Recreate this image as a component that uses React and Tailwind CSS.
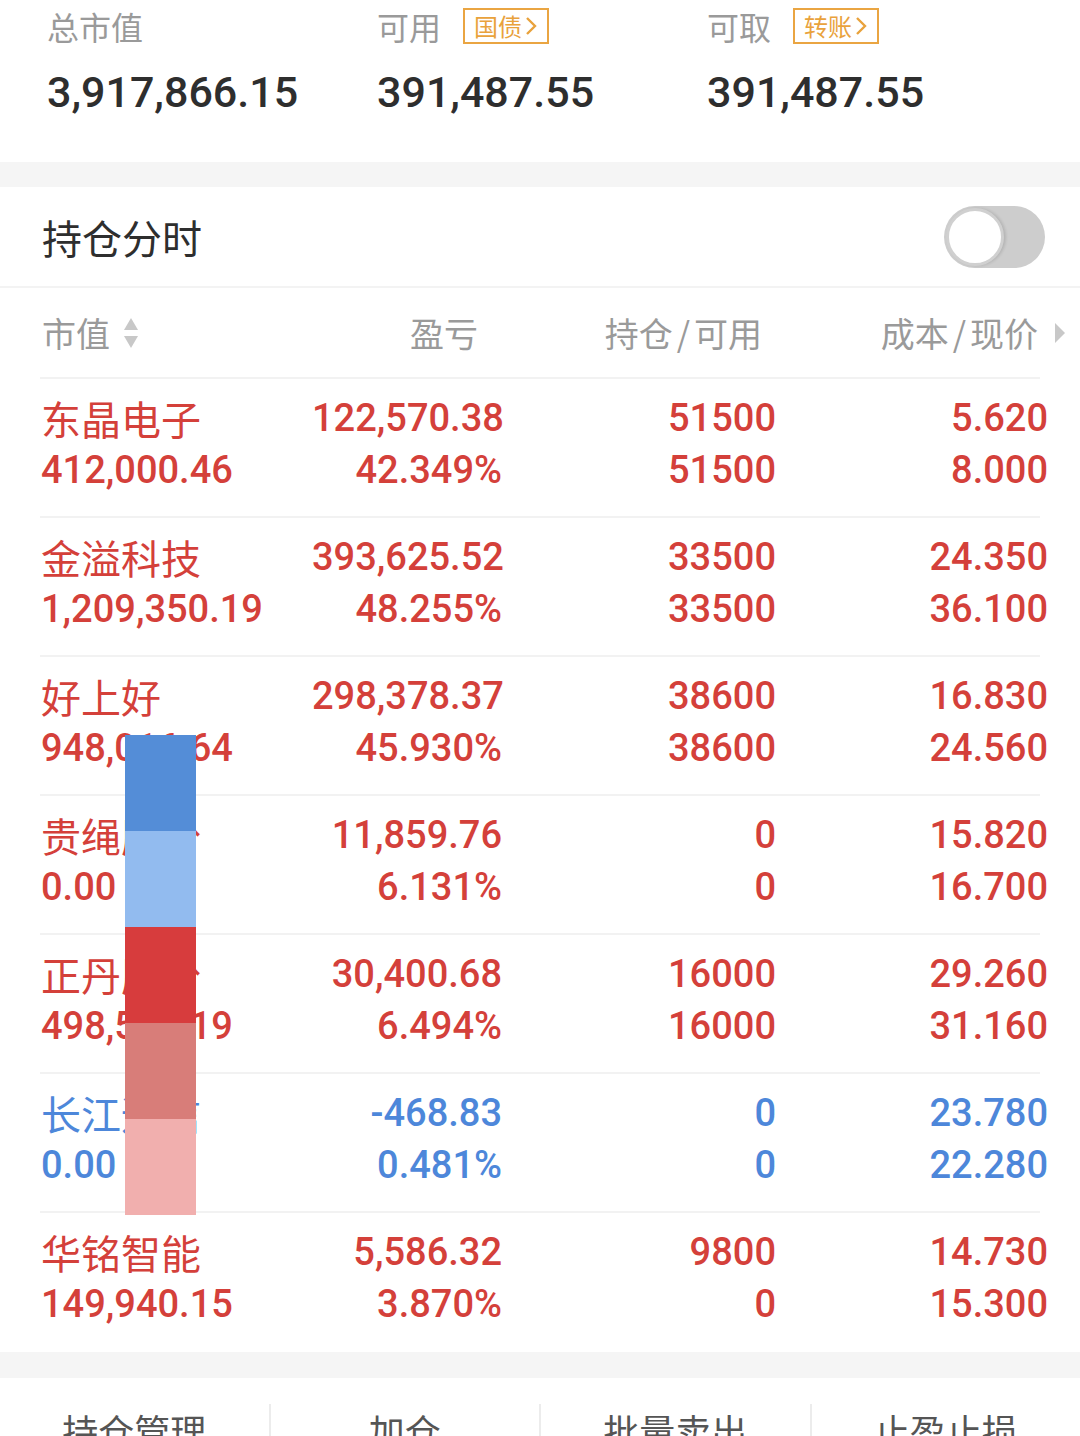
const RED = 'text-[#d4403a]';
const BLUE = 'text-[#4d87da]';

const rows = [
  { name: '东晶电子', value: '412,000.46', pnl: '122,570.38', pct: '42.349%', hold: '51500', avail: '51500', cost: '5.620', price: '8.000', up: true },
  { name: '金溢科技', value: '1,209,350.19', pnl: '393,625.52', pct: '48.255%', hold: '33500', avail: '33500', cost: '24.350', price: '36.100', up: true },
  { name: '好上好', value: '948,016.64', pnl: '298,378.37', pct: '45.930%', hold: '38600', avail: '38600', cost: '16.830', price: '24.560', up: true },
  { name: '贵绳股份', value: '0.00', pnl: '11,859.76', pct: '6.131%', hold: '0', avail: '0', cost: '15.820', price: '16.700', up: true },
  { name: '正丹股份', value: '498,560.19', pnl: '30,400.68', pct: '6.494%', hold: '16000', avail: '16000', cost: '29.260', price: '31.160', up: true },
  { name: '长江通信', value: '0.00', pnl: '-468.83', pct: '0.481%', hold: '0', avail: '0', cost: '23.780', price: '22.280', up: false },
  { name: '华铭智能', value: '149,940.15', pnl: '5,586.32', pct: '3.870%', hold: '9800', avail: '0', cost: '14.730', price: '15.300', up: true },
];

const cjk = "font-['Noto_Sans_CJK_SC',sans-serif]";
const num = "font-['Roboto','Noto_Sans_CJK_SC',sans-serif] font-medium";

function Badge({ children }) {
  return (
    <span className={`ml-[22px] inline-flex h-[36px] items-center border-2 border-[#eaa542] px-[9px] text-[24px] text-[#e9a23c] ${cjk}`}>
      {children}
      <svg width="14" height="22" viewBox="0 0 14 22" className="ml-[2px]">
        <path d="M3 3 L11 11 L3 19" fill="none" stroke="#e9a23c" strokeWidth="2.4" />
      </svg>
    </span>
  );
}

function Summary() {
  const cols = [
    { label: '总市值', value: '3,917,866.15' },
    { label: '可用', value: '391,487.55', badge: '国债' },
    { label: '可取', value: '391,487.55', badge: '转账' },
  ];
  return (
    <div className="flex h-[162px] bg-white pl-[47px]">
      {cols.map((c) => (
        <div key={c.label} className="w-[330px]">
          <div className="flex h-[54px] items-center pb-[2px]">
            <span className={`text-[32px] leading-none text-[#9a9a9a] ${cjk}`}>{c.label}</span>
            {c.badge && <Badge>{c.badge}</Badge>}
          </div>
          <div className={`mt-[8px] text-[43px] leading-[60px] text-[#2e2e2e] ${num}`}>{c.value}</div>
        </div>
      ))}
    </div>
  );
}

function Toggle() {
  return (
    <div className="relative h-[62px] w-[101px] rounded-full bg-[#cdcdcd]">
      <div className="absolute left-[2px] top-[2px] h-[58px] w-[58px] rounded-full border-[3px] border-[#d0d0d0] bg-white shadow-[2px_0_3px_rgba(0,0,0,0.12)]" />
    </div>
  );
}

function SortArrows() {
  return (
    <svg width="18" height="34" viewBox="0 0 18 34" className="ml-[12px]">
      <path d="M9 2 L16 14 L2 14 Z" fill="#c8c8c8" />
      <path d="M2 20 L16 20 L9 32 Z" fill="#c8c8c8" />
    </svg>
  );
}

function HeaderRow() {
  return (
    <div className={`mx-[40px] flex h-[91px] items-center border-b-2 border-[#f2f2f2] text-[34px] text-[#9a9a9a] ${cjk}`}>
      <div className="flex w-[330px] items-center pl-[2px]">
        市值
        <SortArrows />
      </div>
      <div className="w-[108px] text-right">盈亏</div>
      <div className="w-[284px] text-right">
        持仓<span className="mx-[4px]">/</span>可用
      </div>
      <div className="flex flex-1 items-center justify-end">
        成本<span className="mx-[4px]">/</span>现价
        <svg width="12" height="22" viewBox="0 0 12 22" className="ml-[16px] mr-[-26px]">
          <path d="M1 1 L11 11 L1 21 Z" fill="#c8c8c8" />
        </svg>
      </div>
    </div>
  );
}

function Row({ r, last }) {
  const color = r.up ? RED : BLUE;
  return (
    <div className={`ml-[40px] mr-[40px] h-[139px] pt-[13px] ${last ? '' : 'border-b-2 border-[#f2f2f2]'}`}>
      <div className={`mr-[-8px] flex ${color}`}>
        <div className="w-[272px] pl-[1px]">
          <div className={`h-[52px] text-[40px] leading-[52px] ${cjk}`}>{r.name}</div>
          <div className={`h-[52px] text-[38px] leading-[52px] ${num}`}>{r.value}</div>
        </div>
        <div className={`w-[190px] text-right text-[38px] leading-[52px] ${num}`}>
          <div>{r.pnl}</div>
          <div>{r.pct}</div>
        </div>
        <div className={`w-[274px] text-right text-[38px] leading-[52px] ${num}`}>
          <div>{r.hold}</div>
          <div>{r.avail}</div>
        </div>
        <div className={`flex-1 text-right text-[38px] leading-[52px] ${num}`}>
          <div>{r.cost}</div>
          <div>{r.price}</div>
        </div>
      </div>
    </div>
  );
}

function ColorBar() {
  const segs = ['bg-[#548dd7]', 'bg-[#92bbef]', 'bg-[#d73c3d]', 'bg-[#d87d79]', 'bg-[#f1afae]'];
  return (
    <div className="absolute left-[125px] top-[735px] flex w-[71px] flex-col">
      {segs.map((s) => (
        <div key={s} className={`h-[96px] ${s}`} />
      ))}
    </div>
  );
}

export default function App() {
  const tabs = ['持仓管理', '加仓', '批量卖出', '止盈止损'];
  return (
    <div className="relative h-[1436px] w-[1080px] overflow-hidden bg-white">
      <Summary />
      <div className="h-[25px] bg-[#f5f5f5]" />
      <div className="flex h-[101px] items-center justify-between border-b-2 border-[#f3f3f3] pl-[42px] pr-[35px]">
        <span className={`text-[40px] text-[#2e2e2e] ${cjk}`}>持仓分时</span>
        <Toggle />
      </div>
      <HeaderRow />
      {rows.map((r, i) => (
        <Row key={r.name} r={r} last={i === rows.length - 1} />
      ))}
      <div className="h-[26px] bg-[#f5f5f5]" />
      <div className="flex pt-[26px]">
        {tabs.map((t, i) => (
          <div
            key={t}
            className={`flex h-[80px] flex-1 justify-center text-[36px] leading-[52px] text-[#555] ${cjk} ${i > 0 ? 'border-l-2 border-[#ececec]' : ''}`}
          >
            {t}
          </div>
        ))}
      </div>
      <ColorBar />
    </div>
  );
}
